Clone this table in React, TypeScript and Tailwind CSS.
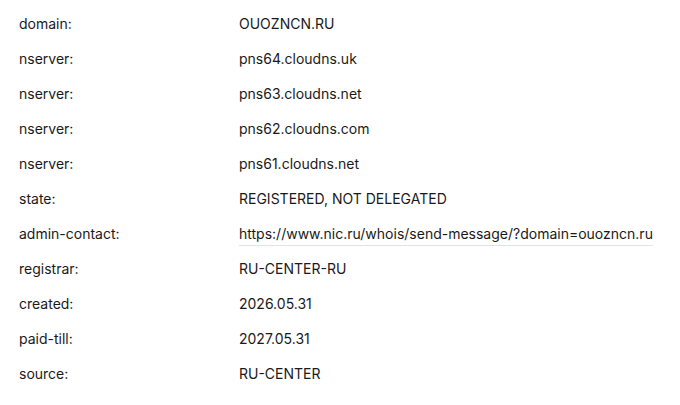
import React from "react";

const rows: [string, string, boolean?][] = [
  ["domain:", "OUOZNCN.RU"],
  ["nserver:", "pns64.cloudns.uk"],
  ["nserver:", "pns63.cloudns.net"],
  ["nserver:", "pns62.cloudns.com"],
  ["nserver:", "pns61.cloudns.net"],
  ["state:", "REGISTERED, NOT DELEGATED"],
  ["admin-contact:", "https://www.nic.ru/whois/send-message/?domain=ouozncn.ru", true],
  ["registrar:", "RU-CENTER-RU"],
  ["created:", "2026.05.31"],
  ["paid-till:", "2027.05.31"],
  ["source:", "RU-CENTER"],
];

export default function App() {
  return (
    <div
      className="w-[680px] h-[405px] bg-white pt-[6px] text-[14px] text-[#1a1a1a]"
      style={{ fontFamily: "Inter, 'Noto Sans', sans-serif" }}
    >
      {rows.map(([k, v, link], i) => (
        <div key={i} className="flex h-[35px] items-center">
          <div className="w-[239px] pl-[19px]">{k}</div>
          <div>
            {link ? (
              <span className="border-b border-[#e2e2e2] pb-[3px]">{v}</span>
            ) : (
              v
            )}
          </div>
        </div>
      ))}
    </div>
  );
}
